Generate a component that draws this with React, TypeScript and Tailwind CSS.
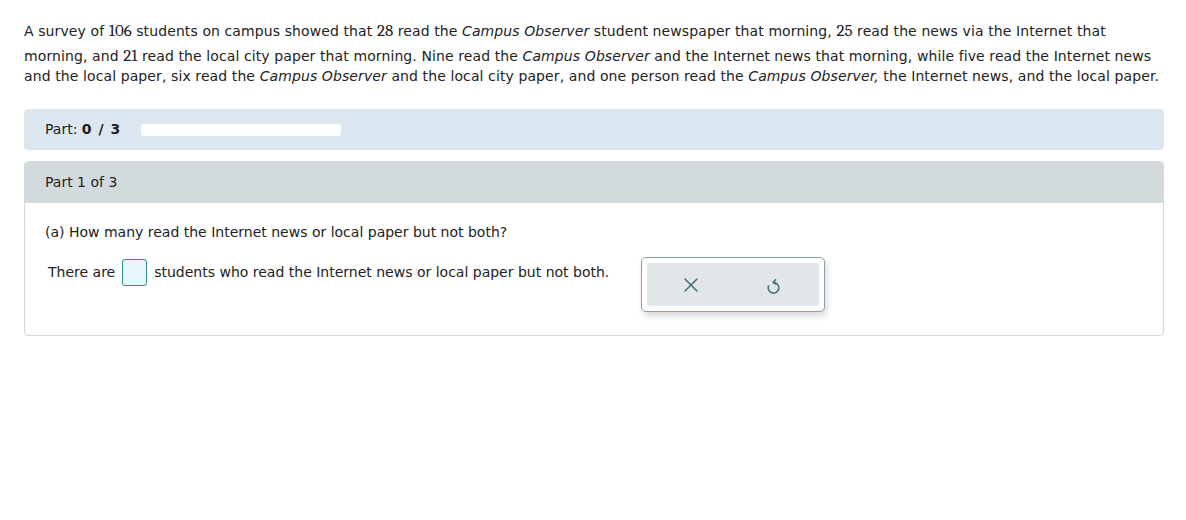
import { X } from "lucide-react";

const Num = ({ children }: { children: React.ReactNode }) => (
  <span className="inline-block pt-[5px] font-serif [font-family:'Liberation_Serif',serif] text-[17px] leading-[20px] tracking-normal">
    {children}
  </span>
);

const UndoIcon = () => (
  <svg width="14" height="16" viewBox="0 0 14 16" fill="none" stroke="currentColor" strokeWidth="1.6" strokeLinecap="round" strokeLinejoin="round">
    <path d="M6.5 4.5a5.3 5.3 0 1 1-5 3.6" />
    <path d="M8.6 1.8 6.2 4.5 9 6" />
  </svg>
);

const App = () => {
  return (
    <div className="min-h-[520px] bg-white pl-6 pr-[22px] pt-4 font-['DejaVu_Sans',Verdana,sans-serif] text-[14px] text-[#222]">
      <p className="leading-[20px] tracking-[0.1px]">
        A survey of <Num>106</Num> students on campus showed that <Num>28</Num> read the <i>Campus Observer</i> student
        newspaper that morning, <Num>25</Num> read the news via the Internet that morning, and <Num>21</Num> read the local
        city paper that morning. Nine read the <i>Campus Observer</i> and the Internet news that morning, while five read the
        Internet news and the local paper, six read the <i>Campus Observer</i> and the local city paper, and one person read
        the <i>Campus Observer,</i> the Internet news, and the local paper.
      </p>

      <div className="mt-[23px] flex h-[41px] items-center rounded-[4px] bg-[#dbe6f0] pl-[21px]">
        <span>
          Part: <b className="tracking-[1px]">0 / 3</b>
        </span>
        <div className="ml-5 h-[12px] w-[200px] rounded-[3px] bg-white" />
      </div>

      <div className="mt-[11px] overflow-hidden rounded-[4px] border border-[#d3dadd]">
        <div className="flex h-[41px] items-center bg-[#d3dadd] pl-5">Part 1 of 3</div>
        <div className="px-5 pb-[23px] pt-[19px]">
          <p>(a) How many read the Internet news or local paper but not both?</p>
          <div className="mt-[16px] flex items-start">
            <div className="flex h-[27px] items-center pl-[3px]">
              <span>There are</span>
              <span className="mx-[7px] inline-block h-[27px] w-[25px] rounded-[3px] border border-[#2a8a96] bg-[#e8f5f9]" />
              <span>students who read the Internet news or local paper but not both.</span>
            </div>
            <div className="ml-[32px] -mt-[2px] rounded-[5px] border border-[#8aa0aa] bg-white p-[5px] shadow-[2px_4px_6px_rgba(0,0,0,0.15)]">
              <div className="flex h-[43px] w-[172px] items-center rounded-[3px] bg-[#e1e7e9] text-[#46707e]">
                <span className="ml-[32px] flex"><X size={24} strokeWidth={1.6} /></span>
                <span className="ml-[64px] mt-[2px] flex"><UndoIcon /></span>
              </div>
            </div>
          </div>
        </div>
      </div>
    </div>
  );
};

export default App;
